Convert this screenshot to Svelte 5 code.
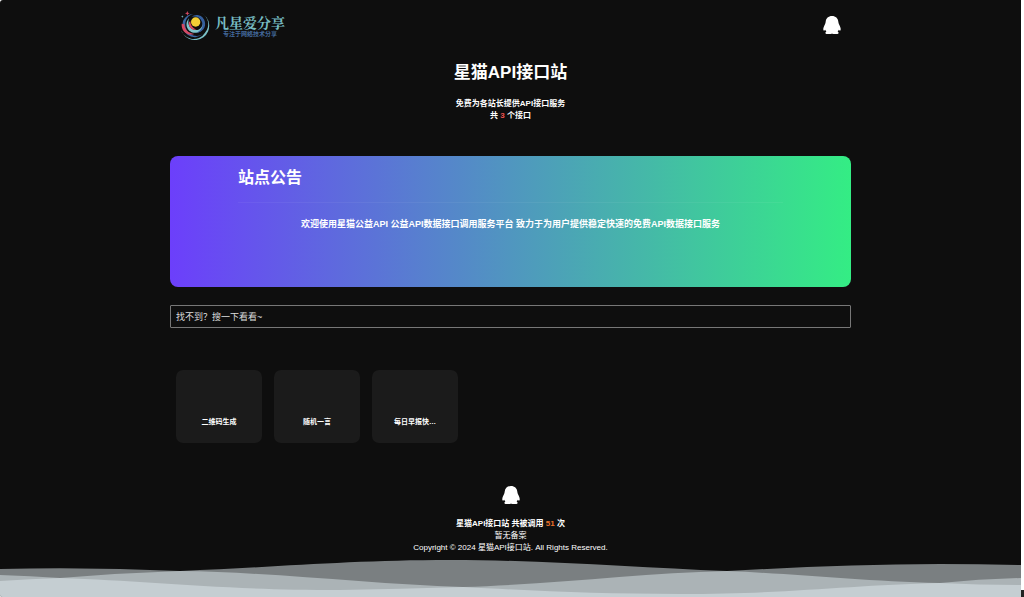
<script>
  let keyword = "";
  const total_calls = 51;

  const apis = [
    { name: "二维码生成", href: "#qrcode" },
    { name: "随机一言", href: "#yiyan" },
    { name: "每日早报快讯", href: "#news" },
  ];

  $: shown = apis.filter((api) => api.name.includes(keyword.trim()));

  const shorten = (name) => (name.length > 5 ? name.slice(0, 5) + "…" : name);
</script>

{#snippet qq()}
  <svg class="qq" viewBox="0 0 54 54" aria-hidden="true">
    <path
      d="M27 0C16 0 9 7 8 17c0 3-1 5-2 8C3 31 0 37 1 42c1 3 3 2 6-1 1 3 2 4 3 6-2 1-3 2-3 4 0 3 5 3 10 3 4 0 8-1 10-1 2 0 6 1 10 1 5 0 10 0 10-3 0-2-1-3-3-4 1-2 2-3 3-6 3 3 5 4 6 1 1-5-2-11-5-17-1-3-2-5-2-8C45 7 38 0 27 0z"
    />
  </svg>
{/snippet}

<div class="window">
  <div class="page">
    <div class="container">
      <header>
        <a class="logo" href="#home">
          <svg viewBox="0 0 90 90" aria-hidden="true">
            <path d="M62 5A43 43 0 1 1 2 50A39 37 0 0 0 75 65A38 38 0 0 0 62 5z" fill="#79bfc6" />
            <path d="M10 28A37 37 0 0 0 68 70A35 35 0 0 1 17 31A32 32 0 0 1 40 9A36 36 0 0 0 10 28z" fill="#3b67a3" />
            <path d="M5 38C3 60 22 76 43 69C25 67 13 55 13 40z" fill="#d64962" />
            <path d="M27 22C9 42 26 70 51 65C69 61 77 44 68 26C72 46 60 58 46 57C29 56 21 39 27 22z" fill="#80c5cb" />
            <path d="M34 18C46 7 68 11 74 30C80 49 66 66 48 65C63 60 71 47 66 33C61 19 47 14 34 18z" fill="#355f9d" />
            <path d="M27 33C24 49 36 59 50 56C40 53 32 45 31 31z" fill="#d64962" />
            <circle cx="47" cy="33" r="14" fill="#f3cf35" />
            <path d="M22 0l2 5 5 2-5 2-2 5-2-5-5-2 5-2z" fill="#d64962" />
            <path d="M7 13l1 3 3 1-3 1-1 3-1-3-3-1 3-1z" fill="#79bfc6" />
          </svg>
          <span class="brand">
            <strong>凡星爱分享</strong>
            <small>专注于网络技术分享</small>
          </span>
        </a>
        <a class="contact" href="#qq" aria-label="QQ">{@render qq()}</a>
      </header>

      <section class="intro">
        <h1>星猫API接口站</h1>
        <p>免费为各站长提供API接口服务</p>
        <p>共 <span class="count">{apis.length}</span> 个接口</p>
      </section>

      <section class="notice">
        <h2>站点公告</h2>
        <hr />
        <p>欢迎使用星猫公益API 公益API数据接口调用服务平台 致力于为用户提供稳定快速的免费API数据接口服务</p>
      </section>

      <input
        class="search"
        type="text"
        aria-label="搜索接口"
        placeholder="找不到？搜一下看看~"
        bind:value={keyword}
      />

      <div class="cards">
        {#each shown as api}
          <a class="card" href={api.href}>{shorten(api.name)}</a>
        {/each}
      </div>
    </div>

    <footer>
      <a href="#qq" aria-label="QQ">{@render qq()}</a>
      <p class="calls">星猫API接口站 共被调用 <span>{total_calls}</span> 次</p>
      <p>暂无备案</p>
      <p>Copyright © 2024 星猫API接口站. All Rights Reserved.</p>
    </footer>

    <svg class="waves" viewBox="0 0 1021 38" preserveAspectRatio="none" aria-hidden="true">
      <path
        fill="#7a7f81"
        d="M0 10Q90 8 180 12C280 8 350 1 450 1C550 1 640 9 727 12C800 8 870 5 940 5Q980 5 1021 6V38H0z"
      />
      <path
        fill="#abb3b6"
        d="M0 16Q30 17 60 19Q120 14 180 12C270 13 370 25 463 28C560 25 640 14 727 12C800 15 860 22 940 24Q980 20 1021 19V38H0z"
      />
      <path
        fill="#c5ced2"
        d="M0 22Q30 20 60 19C150 22 220 31 340 31Q400 30 463 28C540 32 600 35 680 35C790 35 850 26 940 24Q980 26 1021 26V38H0z"
      />
    </svg>
  </div>
  <div class="track"></div>
</div>

<style>
  :global(body) {
    margin: 0;
    background-color: #fff;
  }

  .window {
    display: flex;
    min-height: 100vh;
    color: #fff;
    font-family: "Liberation Sans", "Noto Sans CJK SC", sans-serif;
    font-size: 8px;
    line-height: 12px;
  }

  .page {
    flex: 1;
    display: flex;
    flex-direction: column;
    background-color: #0e0e0e;
    border-radius: 3px 0 0 3px;
    overflow: hidden;
  }

  .track {
    width: 3px;
    background: linear-gradient(#222, #222) bottom / 100% 7px no-repeat #fff;
  }

  .container {
    width: 66.7%;
    margin: 0 auto;
  }

  a {
    color: inherit;
    text-decoration: none;
  }

  h1,
  h2,
  p {
    margin: 0;
  }

  .qq {
    display: block;
    width: 18px;
    height: 18px;
    fill: #fff;
  }

  header {
    display: flex;
    justify-content: space-between;
    align-items: center;
    height: 50px;
    padding: 0 10px;
  }

  .logo {
    display: flex;
    align-items: center;
    gap: 5px;
    padding-top: 2px;
  }

  .logo svg {
    width: 30px;
    height: 30px;
  }

  .brand {
    display: flex;
    flex-direction: column;
    align-items: center;
  }

  .brand strong {
    color: #78bdc3;
    font-family: "Noto Serif CJK SC", "Noto Sans CJK SC", serif;
    font-size: 14px;
    line-height: 16px;
  }

  .brand small {
    color: #43699c;
    font-size: 6px;
    font-weight: 700;
    line-height: 8px;
  }

  .intro {
    padding: 13px 0 34px;
    text-align: center;
    font-weight: 700;
  }

  .intro h1 {
    margin-bottom: 15px;
    font-size: 17px;
    line-height: 20px;
  }

  .count {
    color: #f0524f;
  }

  .notice {
    box-sizing: border-box;
    min-height: 131px;
    padding: 12px 10%;
    border-radius: 8px;
    background: linear-gradient(90deg, #6c3ffb, #34ed84);
  }

  .notice h2 {
    font-size: 16px;
    line-height: 20px;
  }

  .notice hr {
    margin: 14px 0 15px;
    border: 0;
    border-top: 1px solid rgba(255, 255, 255, 0.05);
  }

  .notice p {
    font-size: 9px;
    font-weight: 700;
    text-align: center;
  }

  .search {
    display: block;
    box-sizing: border-box;
    width: 100%;
    height: 23px;
    margin-top: 18px;
    padding: 0 5px;
    border: 1px solid #777;
    border-radius: 1px;
    outline: none;
    background: transparent;
    color: #fff;
    font-family: inherit;
    font-size: 9px;
  }

  .search::placeholder {
    color: #ddd;
    opacity: 1;
  }

  .cards {
    display: grid;
    grid-template-columns: repeat(auto-fill, 86px);
    gap: 12px;
    padding: 42px 6px;
  }

  .card {
    display: flex;
    box-sizing: border-box;
    height: 73px;
    padding-bottom: 15px;
    justify-content: center;
    align-items: flex-end;
    border-radius: 7px;
    background-color: #1b1b1b;
    font-size: 7px;
    font-weight: 700;
  }

  footer {
    display: flex;
    flex-direction: column;
    align-items: center;
  }

  footer a {
    margin: 1px 0 14px;
  }

  .calls {
    font-weight: 700;
  }

  .calls span {
    color: #e8702a;
  }

  .waves {
    display: block;
    width: 100%;
    height: 38px;
    margin-top: auto;
  }
</style>
